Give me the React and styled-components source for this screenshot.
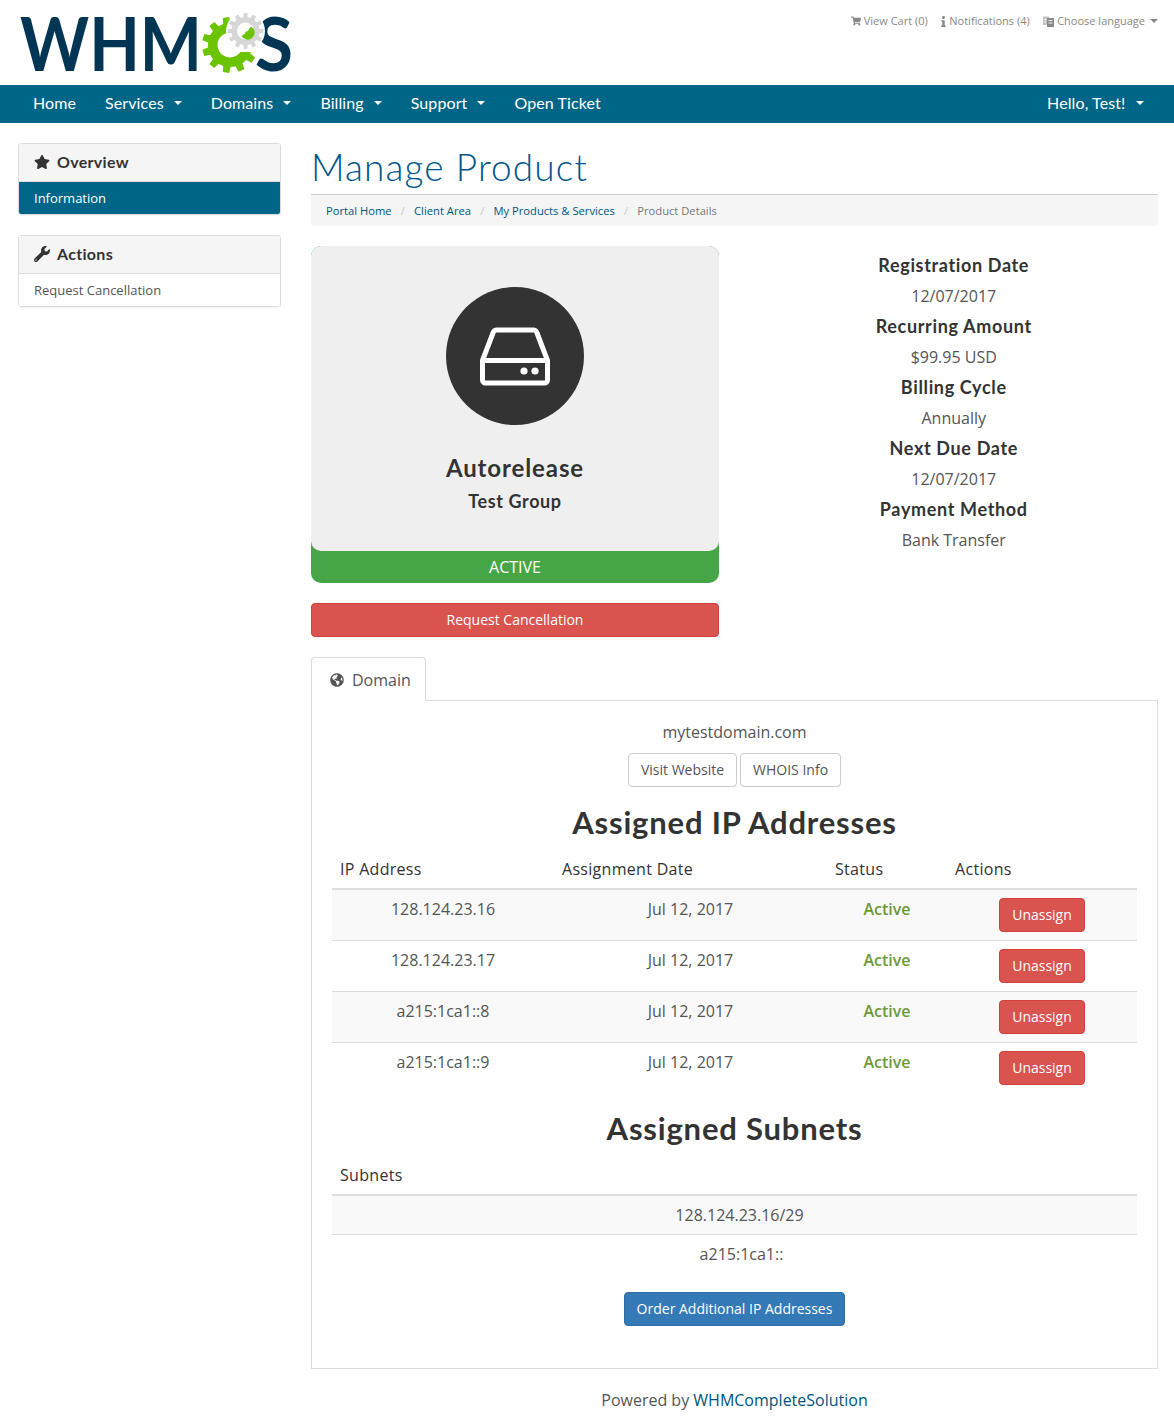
import React from "react";
import styled, { createGlobalStyle } from "styled-components";
import {
  FaStar,
  FaWrench,
  FaShoppingCart,
  FaInfo,
  FaGlobeAmericas,
} from "react-icons/fa";

const GlobalStyle = createGlobalStyle`
  * { box-sizing: border-box; }
  html, body { margin: 0; padding: 0; background: #fff; }
  body {
    font-family: "Open Sans", "Liberation Sans", sans-serif;
    font-size: 14px;
    line-height: 20px;
    color: #333;
  }
`;

const heading = `"Lato", "Liberation Sans", sans-serif`;

// gear outline with teeth, centred on cx/cy
const gearPath = (cx, cy, outer, inner, teeth) => {
  const pts = [];
  const step = (Math.PI * 2) / teeth;
  for (let i = 0; i < teeth; i++) {
    const a = i * step;
    [
      [inner, -0.5],
      [inner, -0.3],
      [outer, -0.2],
      [outer, 0.2],
      [inner, 0.3],
    ].forEach(([r, k]) => {
      const t = a + k * step;
      pts.push(`${(cx + r * Math.cos(t)).toFixed(2)} ${(cy + r * Math.sin(t)).toFixed(2)}`);
    });
  }
  return "M" + pts.join("L") + "Z";
};

const Header = styled.header`
  height: 85px;
  display: flex;
  justify-content: space-between;
  padding: 0 16px 0 20px;
`;

const LogoSvg = styled.svg`
  display: block;
  width: 280px;
  height: 85px;
  overflow: visible;
`;

const TopLinks = styled.div`
  display: flex;
  gap: 13.5px;
  padding-top: 11px;
  font-size: 11px;
  color: #888;
`;

const TopLink = styled.span`
  display: inline-flex;
  align-items: center;
  gap: 3px;
  height: 20px;
`;

const InfoIcon = styled(FaInfo)`
  width: 11px;
  height: 11px;
  margin: 0 -3px;
`;

const Caret = styled.i`
  display: inline-block;
  border-top: 4px solid #fff;
  border-left: 4px solid transparent;
  border-right: 4px solid transparent;
  margin-left: 10px;
`;

const GreyCaret = styled(Caret)`
  border-top-color: #888;
  margin-left: 2px;
`;

const Nav = styled.nav`
  height: 38px;
  background: #006687;
  display: flex;
  justify-content: space-between;
  padding: 0 16px 2px 18.5px;
  font-family: ${heading};
  font-size: 16px;
  color: #fff;
`;

const NavGroup = styled.div`
  display: flex;
`;

const NavItem = styled.a`
  display: flex;
  align-items: center;
  padding: 0 14.5px;
  letter-spacing: 0.1px;
`;

const Page = styled.div`
  display: grid;
  grid-template-columns: 263px 847px;
  column-gap: 30px;
  padding: 20px 16px 0 18px;
`;

const Sidebar = styled.aside`
  display: flex;
  flex-direction: column;
  gap: 20px;
`;

const SidePanel = styled.div`
  border: 1px solid #ddd;
  border-radius: 3px;
  box-shadow: 0 1px 1px rgba(0, 0, 0, 0.05);
  overflow: hidden;
`;

const SideHead = styled.div`
  height: 38px;
  display: flex;
  align-items: center;
  gap: 7px;
  padding: 0 0 2px 15px;
  background: #f5f5f5;
  border-bottom: 1px solid #ddd;
  font-family: ${heading};
  font-size: 16px;
  font-weight: 700;
  letter-spacing: 0.3px;
  color: #333;
  svg { width: 16px; height: 16px; }
`;

const SideItem = styled.div`
  height: 32px;
  display: flex;
  align-items: center;
  padding-left: 15px;
  font-size: 13px;
  color: ${(p) => (p.$active ? "#fff" : "#555")};
  background: ${(p) => (p.$active ? "#006687" : "#fff")};
`;

const Main = styled.main`
  min-width: 0;
`;

const Title = styled.h1`
  margin: 0;
  height: 52px;
  padding-top: 2px;
  border-bottom: 1px solid #ccc;
  font-family: ${heading};
  font-size: 37px;
  line-height: 44px;
  font-weight: 300;
  letter-spacing: 1.1px;
  color: #00568c;
`;

const Crumbs = styled.div`
  height: 31px;
  display: flex;
  align-items: center;
  padding-left: 15px;
  background: #f5f5f5;
  border-radius: 0 0 4px 4px;
  font-size: 11.2px;
`;

const Crumb = styled.span`
  color: ${(p) => (p.$current ? "#777" : "#005580")};
`;

const CrumbSep = styled.span`
  color: #ccc;
  padding: 0 9.2px;
`;

const ProductRow = styled.div`
  display: grid;
  grid-template-columns: 408px 454px;
  margin: 20px -15px 0 0;
`;

const ProductLeft = styled.div`
  display: flex;
  flex-direction: column;
`;

const ProductCard = styled.div`
  height: 337px;
  background: #46a546;
  border-radius: 10px;
  overflow: hidden;
`;

const ProductBody = styled.div`
  height: 305px;
  background: #efefef;
  border-radius: 0 0 10px 10px;
  display: flex;
  flex-direction: column;
  align-items: center;
  padding-top: 41px;
`;

const IconCircle = styled.div`
  width: 138px;
  height: 138px;
  border-radius: 50%;
  background: #333;
  display: flex;
  align-items: center;
  justify-content: center;
`;

const ProductName = styled.h3`
  margin: 27px 0 0;
  font-family: ${heading};
  font-size: 24px;
  line-height: 32px;
  font-weight: 700;
  letter-spacing: 0.9px;
  color: #333;
`;

const ProductGroup = styled.h4`
  margin: 4px 0 0;
  font-family: ${heading};
  font-size: 18px;
  line-height: 26px;
  font-weight: 700;
  letter-spacing: 0.6px;
  color: #333;
`;

const ProductStatus = styled.div`
  height: 32px;
  display: flex;
  align-items: center;
  justify-content: center;
  color: #fff;
  font-size: 16px;
`;

const DangerWide = styled.button`
  height: 34px;
  margin-top: 20px;
  border: 1px solid #d43f3a;
  border-radius: 4px;
  background: #d9534f;
  color: #fff;
  font: inherit;
`;

const Facts = styled.div`
  padding: 4px 0 0 15.5px;
  text-align: center;
`;

const FactLabel = styled.div`
  font-family: ${heading};
  font-size: 18px;
  line-height: 30.5px;
  font-weight: 700;
  letter-spacing: 0.65px;
  color: #333;
`;

const FactValue = styled.div`
  font-size: 16px;
  line-height: 30.5px;
  color: #555;
`;

const Tabs = styled.div`
  display: flex;
  margin-top: 20px;
  height: 44px;
  border-bottom: 1px solid #ddd;
`;

const Tab = styled.div`
  width: 115px;
  height: 44px;
  display: flex;
  align-items: center;
  gap: 8px;
  padding-left: 18px;
  background: #fff;
  border: 1px solid #ddd;
  border-bottom: none;
  border-radius: 4px 4px 0 0;
  font-size: 16px;
  color: #555;
  svg { width: 14px; height: 14px; }
`;

const TabPane = styled.section`
  height: 668px;
  border: 1px solid #ddd;
  border-top: none;
  padding: 20px 20px 0;
  display: flex;
  flex-direction: column;
  align-items: center;
`;

const DomainName = styled.div`
  font-size: 16px;
  line-height: 22px;
  color: #555;
`;

const ButtonRow = styled.div`
  display: flex;
  gap: 3px;
  margin-top: 10px;
`;

const Btn = styled.button`
  height: 34px;
  padding: 0 12px;
  border-radius: 4px;
  font-family: inherit;
  font-size: 14px;
  line-height: 20px;
  border: 1px solid ${(p) => ({ danger: "#d43f3a", primary: "#2e6da4" }[p.$kind] || "#ccc")};
  background: ${(p) => ({ danger: "#d9534f", primary: "#337ab7" }[p.$kind] || "#fff")};
  color: ${(p) => (p.$kind ? "#fff" : "#555")};
`;

const SectionTitle = styled.h2`
  margin: ${(p) => p.$top}px 0 0;
  font-family: ${heading};
  font-size: 31px;
  line-height: 40px;
  font-weight: 700;
  letter-spacing: 0.8px;
  color: #333;
`;

const DataTable = styled.table`
  width: 805px;
  margin-top: 8px;
  border-collapse: collapse;
  table-layout: fixed;
  font-size: 16px;
  color: #555;
`;

const Th = styled.th`
  height: 39px;
  padding: 0 8px 1px;
  text-align: left;
  font-weight: 500;
  letter-spacing: 0.3px;
  color: #333;
  border-bottom: 2px solid #ddd;
`;

const Tr = styled.tr`
  background: ${(p) => (p.$odd ? "#f9f9f9" : "#fff")};
  border-top: ${(p) => (p.$first ? "none" : "1px solid #ddd")};
`;

const Td = styled.td`
  padding: 8px 8px 0;
  height: 51px;
  text-align: center;
  vertical-align: top;
  line-height: 22px;
`;

const SubnetTd = styled(Td)`
  height: 38px;
  padding: 8px 8px 8px ${(p) => p.$left}px;
`;

const StatusText = styled.span`
  font-weight: 600;
  color: #6e9a35;
`;

const OrderRow = styled.div`
  margin-top: 19px;
`;

const Footer = styled.footer`
  margin-top: 20px;
  text-align: center;
  font-size: 16px;
  line-height: 22px;
  color: #555;
  padding-bottom: 8px;
`;

const FooterLink = styled.a`
  color: #005580;
`;

const Logo = () => (
  <LogoSvg viewBox="20 0 280 85">
    <text x="20" y="71" fontFamily="Lato, sans-serif" fontSize="74" fontWeight="700" fill="#003653" textLength="182" lengthAdjust="spacingAndGlyphs">
      WHM
    </text>
    <path
      d={gearPath(230, 45, 28, 22, 11) + "M230 32.5a12.5 12.5 0 1 0 .01 0Z"}
      fillRule="evenodd"
      fill="#6cc400"
    />
    <path d="M232 37h30v15h-30z" fill="#fff" />
    <text x="255" y="71" fontFamily="Lato, sans-serif" fontSize="74" fontWeight="700" fill="#003653" textLength="38" lengthAdjust="spacingAndGlyphs">
      S
    </text>
    <circle cx="245.5" cy="31" r="19.5" fill="#fff" />
    <path
      d={gearPath(245.5, 31, 18, 14, 12) + "M245.5 22.5a8.5 8.5 0 1 0 .01 0Z"}
      fillRule="evenodd"
      fill="#d6d6d6"
    />
    <path d="M251 26.5a7 7 0 1 1-9.5 9.5a7 7 0 0 0 4.5-4.5l2-.5 1-2z" fill="#6cc400" />
  </LogoSvg>
);

const LangIcon = () => (
  <svg width="11" height="12" viewBox="0 0 11 12">
    <path d="M0 1.5h6v8.5H0z" fill="#c4c4c4" />
    <path d="M4 3h7v9H4z" fill="#8a8a8a" />
    <path d="M5.5 5h4v1h-4zM5.5 7.5h4v1h-4z" fill="#eee" />
    <path d="M1.5 4h2v1h-2zM1.5 6.5h1.5v1H1.5z" fill="#fff" />
  </svg>
);

const DriveIcon = () => (
  <svg width="70" height="60" viewBox="0 0 70 60" fill="none" stroke="#fff" strokeWidth="5" strokeLinejoin="round">
    <path d="M2.5 34.5 13 7a4 4 0 0 1 3.5-3h37a4 4 0 0 1 3.5 3L67.5 34.5V54a3 3 0 0 1-3 3h-59a3 3 0 0 1-3-3Z" />
    <path d="M2.5 34.5H67.5" />
    <circle cx="44" cy="45" r="3.6" fill="#fff" stroke="none" />
    <circle cx="55" cy="45" r="3.6" fill="#fff" stroke="none" />
  </svg>
);

const addresses = [
  "128.124.23.16",
  "128.124.23.17",
  "a215:1ca1::8",
  "a215:1ca1::9",
];

const facts = [
  ["Registration Date", "12/07/2017"],
  ["Recurring Amount", "$99.95 USD"],
  ["Billing Cycle", "Annually"],
  ["Next Due Date", "12/07/2017"],
  ["Payment Method", "Bank Transfer"],
];

const App = () => (
  <>
    <GlobalStyle />
    <Header>
      <Logo />
      <TopLinks>
        <TopLink><FaShoppingCart size={10} /> View Cart (0)</TopLink>
        <TopLink><InfoIcon /> Notifications (4)</TopLink>
        <TopLink><LangIcon /> Choose language<GreyCaret /></TopLink>
      </TopLinks>
    </Header>
    <Nav>
      <NavGroup>
        <NavItem>Home</NavItem>
        <NavItem>Services<Caret /></NavItem>
        <NavItem>Domains<Caret /></NavItem>
        <NavItem>Billing<Caret /></NavItem>
        <NavItem>Support<Caret /></NavItem>
        <NavItem>Open Ticket</NavItem>
      </NavGroup>
      <NavGroup>
        <NavItem>Hello, Test!<Caret /></NavItem>
      </NavGroup>
    </Nav>
    <Page>
      <Sidebar>
        <SidePanel>
          <SideHead><FaStar /> Overview</SideHead>
          <SideItem $active>Information</SideItem>
        </SidePanel>
        <SidePanel>
          <SideHead><FaWrench /> Actions</SideHead>
          <SideItem>Request Cancellation</SideItem>
        </SidePanel>
      </Sidebar>
      <Main>
        <Title>Manage Product</Title>
        <Crumbs>
          <Crumb>Portal Home</Crumb><CrumbSep>/</CrumbSep>
          <Crumb>Client Area</Crumb><CrumbSep>/</CrumbSep>
          <Crumb>My Products &amp; Services</Crumb><CrumbSep>/</CrumbSep>
          <Crumb $current>Product Details</Crumb>
        </Crumbs>
        <ProductRow>
          <ProductLeft>
            <ProductCard>
              <ProductBody>
                <IconCircle><DriveIcon /></IconCircle>
                <ProductName>Autorelease</ProductName>
                <ProductGroup>Test Group</ProductGroup>
              </ProductBody>
              <ProductStatus>ACTIVE</ProductStatus>
            </ProductCard>
            <DangerWide>Request Cancellation</DangerWide>
          </ProductLeft>
          <Facts>
            {facts.map(([label, value]) => (
              <React.Fragment key={label}>
                <FactLabel>{label}</FactLabel>
                <FactValue>{value}</FactValue>
              </React.Fragment>
            ))}
          </Facts>
        </ProductRow>
        <Tabs>
          <Tab><FaGlobeAmericas /> Domain</Tab>
        </Tabs>
        <TabPane>
          <DomainName>mytestdomain.com</DomainName>
          <ButtonRow>
            <Btn>Visit Website</Btn>
            <Btn>WHOIS Info</Btn>
          </ButtonRow>
          <SectionTitle $top={15}>Assigned IP Addresses</SectionTitle>
          <DataTable>
            <colgroup>
              <col width="222" />
              <col width="273" />
              <col width="120" />
              <col width="190" />
            </colgroup>
            <thead>
              <tr>
                <Th>IP Address</Th>
                <Th>Assignment Date</Th>
                <Th>Status</Th>
                <Th>Actions</Th>
              </tr>
            </thead>
            <tbody>
              {addresses.map((ip, i) => (
                <Tr key={ip} $odd={i % 2 === 0} $first={i === 0}>
                  <Td>{ip}</Td>
                  <Td>Jul 12, 2017</Td>
                  <Td><StatusText>Active</StatusText></Td>
                  <Td><Btn $kind="danger">Unassign</Btn></Td>
                </Tr>
              ))}
            </tbody>
          </DataTable>
          <SectionTitle $top={15}>Assigned Subnets</SectionTitle>
          <DataTable>
            <thead>
              <tr><Th>Subnets</Th></tr>
            </thead>
            <tbody>
              <Tr $odd $first><SubnetTd $left={18}>128.124.23.16/29</SubnetTd></Tr>
              <Tr><SubnetTd $left={22}>a215:1ca1::</SubnetTd></Tr>
            </tbody>
          </DataTable>
          <OrderRow>
            <Btn $kind="primary">Order Additional IP Addresses</Btn>
          </OrderRow>
        </TabPane>
        <Footer>
          Powered by <FooterLink>WHMCompleteSolution</FooterLink>
        </Footer>
      </Main>
    </Page>
  </>
);

export default App;
